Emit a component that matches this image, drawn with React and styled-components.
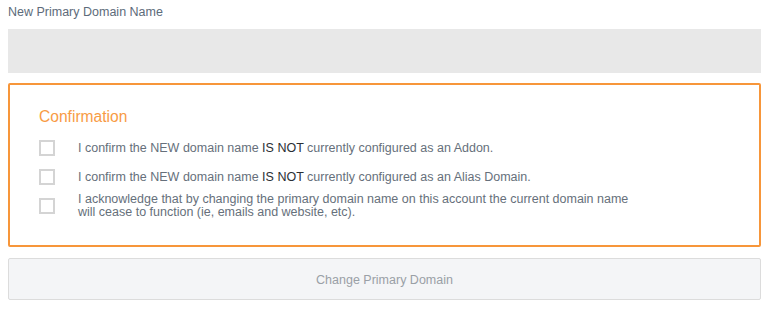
import styled, { createGlobalStyle } from 'styled-components';

const Global = createGlobalStyle`
  body {
    margin: 0;
    background: #fff;
    font-family: "Liberation Sans", Arial, sans-serif;
  }
`;

const Page = styled.div`
  padding: 5px 7px 0 8px;
  display: flex;
  flex-direction: column;
`;

const Label = styled.label`
  font-size: 12.5px;
  color: #5d6b7a;
  line-height: 15px;
  margin-bottom: 9px;
`;

const Input = styled.div`
  height: 44px;
  background: #e8e8e8;
  margin-bottom: 10px;
`;

const Box = styled.div`
  border: 2px solid #f7963a;
  border-radius: 2px;
  height: 164px;
  box-sizing: border-box;
  padding: 22px 29px 0 29px;
  margin-bottom: 11px;
`;

const Title = styled.h3`
  margin: 0 0 3px 0;
  font-weight: normal;
  font-size: 15.6px;
  line-height: 20px;
  color: #f89b45;
`;

const Row = styled.label`
  display: flex;
  align-items: center;
  gap: 23px;
  margin-top: ${({ multi }) => (multi ? '8px' : '13px')};
`;

const Check = styled.span`
  flex: none;
  width: 16px;
  height: 16px;
  box-sizing: border-box;
  border: 2px solid #d4d4d4;
  background: #fff;
`;

const Text = styled.span`
  font-size: 12.5px;
  line-height: 13px;
  color: #66707b;
  max-width: 566px;

  b {
    font-weight: normal;
    color: #2b2f33;
  }
`;

const Button = styled.button`
  height: 42px;
  padding-top: 2px;
  background: #f4f5f7;
  border: 1px solid #dcdcdc;
  border-radius: 2px;
  font-family: inherit;
  font-size: 12.5px;
  color: #9aa0a6;
`;

export default function App() {
  return (
    <>
      <Global />
      <Page>
        <Label>New Primary Domain Name</Label>
        <Input />
        <Box>
          <Title>Confirmation</Title>
          <Row>
            <Check />
            <Text>I confirm the NEW domain name <b>IS NOT</b> currently configured as an Addon.</Text>
          </Row>
          <Row>
            <Check />
            <Text>I confirm the NEW domain name <b>IS NOT</b> currently configured as an Alias Domain.</Text>
          </Row>
          <Row multi>
            <Check />
            <Text>I acknowledge that by changing the primary domain name on this account the current domain name will cease to function (ie, emails and website, etc).</Text>
          </Row>
        </Box>
        <Button disabled>Change Primary Domain</Button>
      </Page>
    </>
  );
}
